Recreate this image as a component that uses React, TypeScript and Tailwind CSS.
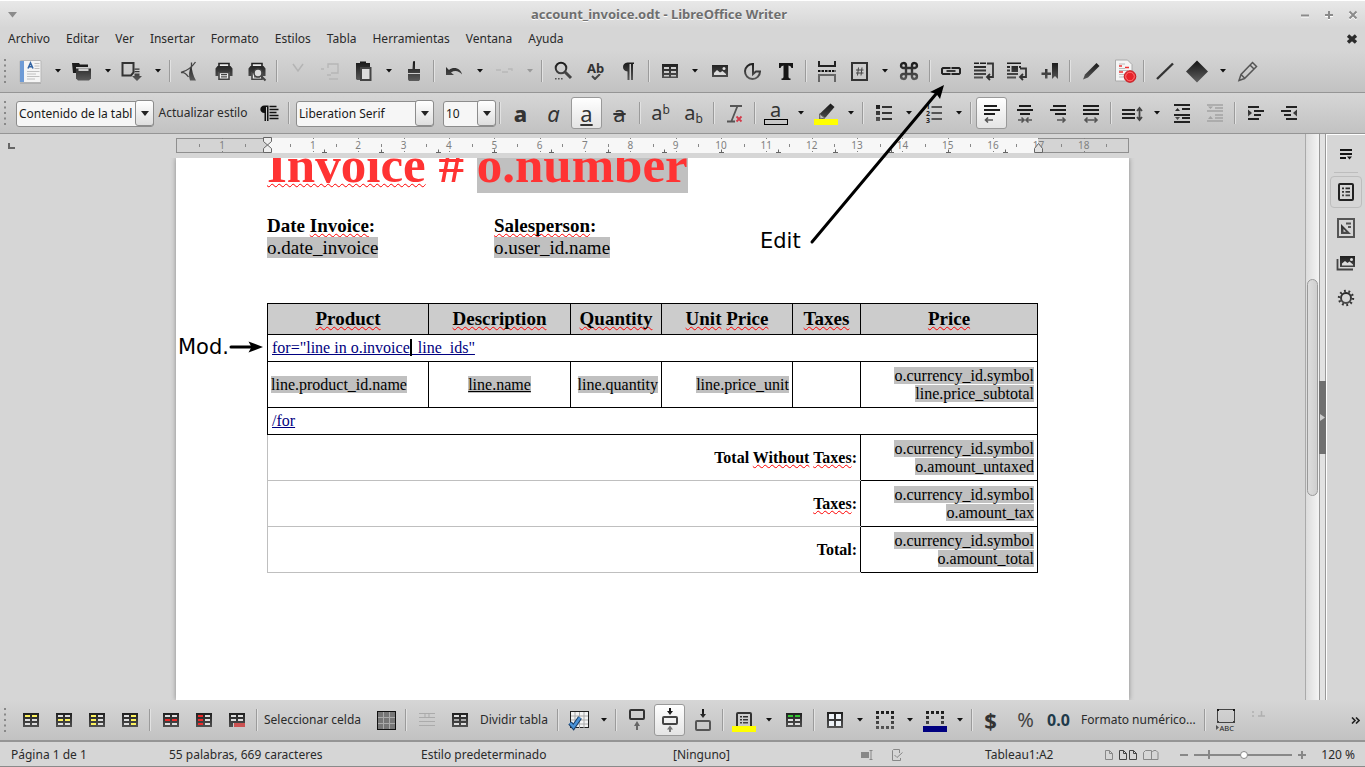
import React from "react";

type Kids = { children?: React.ReactNode };

const G = "url(#ink)";

function Ico({ children }: Kids) {
  return (
    <svg viewBox="0 0 24 24" className="h-6 w-6 shrink-0 overflow-visible" fill={G} aria-hidden="true">
      {children}
    </svg>
  );
}

function Btn({ label, active, children }: Kids & { label: string; active?: boolean }) {
  return (
    <button
      type="button"
      aria-label={label}
      title={label}
      className={
        active
          ? "mx-px flex h-8 w-[31px] shrink-0 items-center justify-center rounded-[3px] border border-[#999] bg-gradient-to-b from-white to-[#e4e4e4]"
          : "flex h-8 w-[33px] shrink-0 items-center justify-center"
      }
    >
      {children}
    </button>
  );
}

function Arrow({ dim }: { dim?: boolean }) {
  return (
    <button type="button" aria-label="Más opciones" className="flex h-8 w-[17px] shrink-0 items-center justify-center">
      <svg viewBox="0 0 6 4" className="h-1 w-1.5" fill={dim ? "#999" : "#111"} aria-hidden="true">
        <path d="M0 0H6L3 3.6z" />
      </svg>
    </button>
  );
}

function Sep() {
  return (
    <div className="flex w-2 shrink-0 justify-center">
      <div className="h-[22px] w-0.5 border-l border-[#9b9b9b] bg-[#e2e2e2]" />
    </div>
  );
}

function Handle({ wide }: { wide?: boolean }) {
  return (
    <div className={wide ? "w-4 shrink-0 pl-1" : "w-3.5 shrink-0 pl-1"}>
      <svg viewBox="0 0 2 24" className="h-6 w-0.5" fill="#888" aria-hidden="true">
        <path d="M0 0h2v2H0zM0 5.5h2v2H0zM0 11h2v2H0zM0 16.5h2v2H0zM0 22h2v2H0z" />
      </svg>
    </div>
  );
}

function Combo({ label, value, width }: { label: string; value: string; width: string }) {
  return (
    <div className={`relative h-[26px] shrink-0 ${width}`}>
      <select
        aria-label={label}
        className="h-full w-full appearance-none overflow-hidden rounded-[3px] border border-[#8c8c8c] bg-[#f6f6f6] pr-[21px] pl-0.5 text-xs text-[#1a1a1a]"
      >
        <option>{value}</option>
      </select>
      <span className="pointer-events-none absolute inset-y-0 right-0 flex w-[19px] items-center justify-center rounded-[3px] border border-[#8c8c8c] bg-gradient-to-b from-white to-[#dedede]">
        <svg viewBox="0 0 8 5" className="h-[5px] w-2" fill="#222" aria-hidden="true">
          <path d="M0 0H8L4 5z" />
        </svg>
      </span>
    </div>
  );
}

function TitleBar() {
  return (
    <header className="flex h-7 shrink-0 items-center border-t border-white bg-gradient-to-b from-[#e8e8e8] to-[#d6d6d6] text-[#8b8b8b]">
      <button type="button" aria-label="Menú de ventana" className="flex w-[25px] justify-center">
        <svg viewBox="0 0 9 6" className="h-1.5 w-[9px]" fill="#8b8b8b" aria-hidden="true">
          <path d="M0 0H9L4.5 5.5z" />
        </svg>
      </button>
      <h1 className="flex-1 text-center text-[13px] font-bold text-[#6e6e6e] [text-shadow:0_1px_0_#fff]">
        account_invoice.odt - LibreOffice Writer
      </h1>
      {[
        ["Minimizar", "M1 5.5H9"],
        ["Maximizar", "M1 5H9M5 1V9"],
        ["Cerrar", "M1.5 1.5L8.5 8.5M8.5 1.5L1.5 8.5"],
      ].map(([n, d]) => (
        <button key={n} type="button" aria-label={n} className="flex w-6 justify-center">
          <svg viewBox="0 0 10 10" className="h-2.5 w-2.5" fill="none" aria-hidden="true">
            <path d={d} stroke="#fff" strokeWidth="2" transform="translate(0 1)" />
            <path d={d} stroke="#8b8b8b" strokeWidth="2" />
          </svg>
        </button>
      ))}
    </header>
  );
}

const MENUS = ["Archivo", "Editar", "Ver", "Insertar", "Formato", "Estilos", "Tabla", "Herramientas", "Ventana", "Ayuda"];

function MenuBar() {
  return (
    <nav className="flex h-[22px] shrink-0 items-center justify-between bg-[#d6d6d6] pr-2">
      <div className="flex">
        {MENUS.map((m) => (
          <button key={m} type="button" className="px-2 text-xs leading-5">
            {m}
          </button>
        ))}
      </div>
      <button type="button" aria-label="Cerrar documento">
        <svg viewBox="0 0 10 10" className="h-2.5 w-2.5" aria-hidden="true">
          <path d="M1 1.5L9 8.5M9 1.5L1 8.5" stroke="#2c2c2c" strokeWidth="3.4" />
        </svg>
      </button>
    </nav>
  );
}

function Printer() {
  return (
    <>
      <path d="M7 4.5h10v4H7z" fill="#eee" stroke="#222" strokeWidth="1.6" />
      <path d="M3.5 9.5L5.5 7h13l2 2.5V17h-3v-4h-11v4h-3z" />
      <path d="M7 13.5h10v6.7H7z" fill="#eee" stroke="#444" strokeWidth="1.6" />
      <path d="M9 15h6v1.2H9zM9 17.3h6v1.2H9z" />
    </>
  );
}

function StandardBar() {
  return (
    <div role="toolbar" aria-label="Estándar" className="flex h-[43px] shrink-0 items-center border-b border-[#959595] bg-gradient-to-b from-[#d6d6d6] to-[#c2c2c2]">
      <Handle wide />
      <Btn label="Nuevo">
        <Ico>
          <rect x="-1" y="23" width="21" height="2" fill="#999" opacity=".5" />
          <rect x="-1" y="1.5" width="21" height="22" rx="1" fill="#f5f5f5" stroke="#b5b5b5" />
          <path d="M-1 2h4v21h-4z" fill="#6e9bd6" />
          <path d="M7 9.5L9.5 4l2.5 5.5M8 7.7h3" fill="none" stroke="#3465a4" strokeWidth="1.6" />
          <path d="M13.5 4.5h5M13.5 7h5M13.5 9.5h5M6 12.5h12.5M6 15h9M6 17.5h12.5M6 20h8" stroke="#c0c0c0" />
        </Ico>
      </Btn>
      <Arrow />
      <Btn label="Abrir">
        <Ico>
          <path d="M1 4h7l1 1.5h8V8H5v6H2z" fill="#1c1c1c" />
          <path d="M5 9.5h15v10L18 21.500H7L5 19.500z" />
          <path d="M7.500 9.500h10v2.500h-10z" fill="#ccc" />
        </Ico>
      </Btn>
      <Arrow />
      <Btn label="Guardar">
        <Ico>
          <path d="M1.5 4h11v9.500L10 16.5H1.5z" fill="none" stroke="#333" strokeWidth="2" />
          <path d="M13.500 9.500h5v1.300h-5zM13.500 12h5v1.300h-5zM13.500 14.500h5V17H21l-5 5-5-5h2.500z" />
        </Ico>
      </Btn>
      <Arrow />
      <Sep />
      <Btn label="Exportar a PDF">
        <Ico>
          <path d="M12.500 6Q13 15 17 21.500h-6Q8.500 14 12.500 6z" />
          <path d="M16.500 3Q11 11 2 13.500 6 13 9.500 18M12.500 3.500v5" fill="none" stroke="#444" strokeWidth="1.300" />
        </Ico>
      </Btn>
      <Btn label="Imprimir"><Ico><Printer /></Ico></Btn>
      <Btn label="Previsualización">
        <Ico>
          <Printer />
          <circle cx="13" cy="14" r="4" fill="#ddd" stroke="#444" strokeWidth="1.6" />
          <path d="M16 17l4.500 4.500" stroke="#444" strokeWidth="2" />
        </Ico>
      </Btn>
      <Sep />
      <Btn label="Cortar"><Ico><path d="M7 5l5 7 5-7" fill="none" stroke="#b4b4b4" strokeWidth="1.5" /></Ico></Btn>
      <Btn label="Copiar"><Ico><path d="M9 9V5h10v9h-7M5 10H2M10 20h9M8 16h4" fill="none" stroke="#b6b6b6" strokeWidth="1.3" /></Ico></Btn>
      <Btn label="Pegar">
        <Ico>
          <path d="M4 4h4V2.500h6V4h4v4H9v13H5l-1-1z" />
          <path d="M9 9h9.500v12H9z" fill="#ddd" stroke="#444" strokeWidth="2" />
        </Ico>
      </Btn>
      <Arrow />
      <Btn label="Clonar formato"><Ico><path d="M11 2.500q1.500-1 2 0V10h5v4H6v-4h4.500zM6 15h12v5.500L17 22H7l-1-1.500z" /></Ico></Btn>
      <Sep />
      <Btn label="Deshacer"><Ico><path d="M3 8v8h8l-3-2.500c4-2.500 8-1.500 11 2-1-6-8-8.500-13-4.500z" /></Ico></Btn>
      <Arrow />
      <Btn label="Rehacer"><Ico><path d="M3 11h5M9 13h6M15 10h4v2" fill="none" stroke="#b8b8b8" strokeWidth="1.300" /></Ico></Btn>
      <Arrow dim />
      <Sep />
      <Btn label="Buscar y reemplazar">
        <Ico>
          <circle cx="10" cy="9" r="5.300" fill="none" stroke={G} strokeWidth="2" />
          <path d="M14 13l6 6" stroke="#444" strokeWidth="3" />
          <path d="M4 19h1.600v1.600H4zM7 19h1.600v1.600H7zM10 19h1.600v1.600H10z" />
        </Ico>
      </Btn>
      <Btn label="Ortografía">
        <span className="flex flex-col items-center text-[13px] leading-3 font-bold text-[#333]">
          Ab
          <svg viewBox="0 0 10 6" className="h-1.5 w-2.5" fill="none" stroke="#444" strokeWidth="2" aria-hidden="true"><path d="M1 2l3 3 5-5" /></svg>
        </span>
      </Btn>
      <Btn label="Marcas de formato"><Ico><path d="M17 3.500v1.500h-1v16h-2V5h-1.500v16h-2v-8.500C4.500 12.500 4.500 3.500 10.500 3.500z" /></Ico></Btn>
      <Sep />
      <Btn label="Tabla"><Ico><path fillRule="evenodd" d="M4 5h16v14H4zM6 8v2h5V8zm7 0v2h5V8zM6 12v2h5v-2zm7 0v2h5v-2zM6 16v1.500h5V16zm7 0v1.500h5V16z" /></Ico></Btn>
      <Arrow />
      <Btn label="Imagen"><Ico><path d="M4 6h16v12H4z" /><path d="M6 16v-2l3-3 3 2.500 2.500-1.500 3.500 3v1z" fill="#ddd" /><circle cx="16" cy="9.500" r="1.500" fill="#ddd" /></Ico></Btn>
      <Btn label="Gráfico"><Ico><path d="M12 5A7.500 7.500 0 1 0 19 12.500h-4L12 15z" fill="none" stroke={G} strokeWidth="2" /></Ico></Btn>
      <Btn label="Cuadro de texto"><Ico><path d="M5 4h14v5h-1.500Q17 6.500 14.500 6.500V18q0 1.500 2 1.500V21h-9v-1.500q2 0 2-1.500V6.500Q7 6.500 6.500 9H5z" fill="#151515" /></Ico></Btn>
      <Sep />
      <Btn label="Salto de página">
        <Ico>
          <path d="M4 2v5h16V2" fill="none" stroke="#222" strokeWidth="2" />
          <path d="M4 23v-7h16v7" fill="none" stroke="#666" strokeWidth="2" />
          <path d="M3 12h18" stroke="#111" strokeWidth="2" strokeDasharray="2.500 1" />
        </Ico>
      </Btn>
      <Btn label="Campo"><Ico><rect x="4" y="4" width="15" height="17" fill="none" stroke="#333" strokeWidth="2" /><path d="M10.500 8.500l-1 8M14 8.500l-1 8M8 11h7.500M8 14h7.500" stroke="#444" fill="none" /></Ico></Btn>
      <Arrow />
      <Btn label="Carácter especial"><Ico><path d="M9 9H6A2.500 2.500 0 1 1 9 6v12A2.500 2.500 0 1 1 6 15h12A2.500 2.500 0 1 1 15 18V6A2.500 2.500 0 1 1 18 9z" transform="translate(-1 0)" fill="none" stroke={G} strokeWidth="2.400" /></Ico></Btn>
      <Sep />
      <Btn label="Hiperenlace">
        <Ico>
          <path d="M10.500 10V9H4L3 10v4l1 1h6.500v-1M13.500 10V9H20l1 1v4l-1 1h-6.500v-1" fill="none" stroke="#222" strokeWidth="2" />
          <path d="M7.500 11h9v2h-9z" />
        </Ico>
      </Btn>
      <Btn label="Nota al pie">
        <Ico>
          <path d="M2 3.500h5V5H2zM8 3.500h6V5H8zM2 7h12v2H2zM2 10.500h12v2H2zM2 14h12v2H2zM2 17.500h9v2H2z" />
          <path d="M15 4.500h6V18h-6M18 15l-3 3 3 3" fill="none" stroke="#333" strokeWidth="1.800" />
        </Ico>
      </Btn>
      <Btn label="Nota final">
        <Ico>
          <path d="M2 3.500h14V5H2zM2 7h3v2H2zM6.500 7H13v6H6.500zM2 10.500h3v2H2zM2 14h11v2H2zM2 17.500h9v2H2zM14 7h2v2h-2z" />
          <path d="M15 9.500h6V18h-6M18 15l-3 3 3 3" fill="none" stroke="#333" strokeWidth="1.800" />
        </Ico>
      </Btn>
      <Btn label="Marcador"><Ico><path d="M14 4h6v16l-3-3-3 3zM7 10h2.500v3.500H13V16H9.500v3.500H7V16H3.500v-2.500H7z" /></Ico></Btn>
      <Sep />
      <Btn label="Comentario"><Ico><path d="M17.500 4L20.500 7 9 18.500 4 20.500 6 15.500z" /></Ico></Btn>
      <Btn label="Control de cambios">
        <Ico>
          <path d="M3.500 1h12l4.500 4.500V22H3.500z" fill="#f5f5f5" stroke="#aaa" />
          <path d="M7 7h3M13 8.500h4M7 13h4" stroke="#e33" strokeWidth="1.300" />
          <path d="M7 5h6M7 9.500h6M7 11.500h9M7 15.500h5M7 18h5" stroke="#bbb" />
          <circle cx="18" cy="17.500" r="5.800" fill="#e8232a" stroke="#c4171d" />
          <circle cx="18" cy="17.500" r="4.300" fill="none" stroke="#f77" />
        </Ico>
      </Btn>
      <Sep />
      <Btn label="Línea"><Ico><path d="M4 20L20 4.500" stroke="#333" strokeWidth="2.400" /></Ico></Btn>
      <Btn label="Formas"><Ico><path d="M11 1.500l11 11-11 11-11-11z" /></Ico></Btn>
      <Arrow />
      <Btn label="Funciones de dibujo"><Ico><path d="M16.500 3.500l4 4L8.500 19.500l-5.500 2 2-6zM14 6l4 4M5.500 16l3 3" fill="none" stroke="#555" strokeWidth="1.500" /></Ico></Btn>
    </div>
  );
}

function Align({ lines, arrow }: { lines: string; arrow: string }) {
  return (
    <Ico>
      <path d={lines} stroke="#1c1c1c" strokeWidth="2" />
      <path d={arrow} fill="none" stroke="#555" strokeWidth="1.600" />
    </Ico>
  );
}

function FormatBar() {
  return (
    <div role="toolbar" aria-label="Formato" className="flex h-[41px] shrink-0 items-center border-b border-[#959595] bg-gradient-to-b from-[#d6d6d6] to-[#c2c2c2]">
      <Handle wide />
      <Combo label="Estilo de párrafo" value="Contenido de la tabla" width="w-[138px]" />
      <button type="button" className="w-[98px] shrink-0 text-center text-xs">Actualizar estilo</button>
      <Btn label="Estilo nuevo">
        <Ico>
          <path d="M11.500 4.500V20H10V6H9v14H7.500v-8C2 12 2 4.500 7.500 4.500z" fill="#111" />
          <path d="M12.500 5.500h7M12.500 8.500h9M12.500 11.500h7M12.500 14.500h9M12.500 17.500h9" stroke="#111" strokeWidth="1.600" />
        </Ico>
      </Btn>
      <Sep />
      <div className="flex gap-[9px] pl-[3px]">
        <Combo label="Nombre del tipo de letra" value="Liberation Serif" width="w-[138px]" />
        <Combo label="Tamaño de letra" value="10" width="w-[53px]" />
      </div>
      <Sep />
      <Btn label="Negrita"><span className="text-[22px] leading-6 font-extrabold text-[#333]">a</span></Btn>
      <Btn label="Cursiva"><span className="text-[22px] leading-6 text-[#333] italic">a</span></Btn>
      <Btn label="Subrayado" active><span className="text-[22px] leading-6 text-[#333] underline decoration-2 underline-offset-2">a</span></Btn>
      <Btn label="Tachado"><span className="text-[22px] leading-6 text-[#333] line-through decoration-2">a</span></Btn>
      <Sep />
      <Btn label="Superíndice"><span className="text-xl leading-6 text-[#333]">a<sup className="text-[12px]">b</sup></span></Btn>
      <Btn label="Subíndice"><span className="text-xl leading-6 text-[#333]">a<sub className="text-[12px]">b</sub></span></Btn>
      <Sep />
      <Btn label="Limpiar formato">
        <Ico>
          <path d="M7 5h12M4 20.500h8M14.500 5L8.500 20" fill="none" stroke="#555" strokeWidth="1.800" />
          <path d="M13.500 15.500l5 5M18.500 15.500l-5 5" stroke="#d33a4a" strokeWidth="1.800" />
        </Ico>
      </Btn>
      <Sep />
      <Btn label="Color de letra">
        <span className="flex flex-col items-center">
          <span className="text-xl leading-[18px] text-[#333]">a</span>
          <span className="h-1.5 w-6 border border-black" />
        </span>
      </Btn>
      <Arrow />
      <Btn label="Color de resaltado">
        <Ico>
          <path d="M16.500 2.500l4 3.500-9 10.500L5 18l.500-5z" />
          <path d="M5.500 13l5.500 4-5 1z" fill="#bbb" stroke="#666" />
          <rect y="18" width="24" height="6" fill="#ff0" />
        </Ico>
      </Btn>
      <Arrow />
      <Sep />
      <Btn label="Viñetas">
        <Ico>
          <path d="M4 4h4v4H4zM4 10h4v4H4zM4 16h4v4H4z" />
          <path d="M10 6h10M10 12h10M10 18h10" stroke="#333" strokeWidth="2" />
        </Ico>
      </Btn>
      <Arrow />
      <Btn label="Numeración">
        <Ico>
          <path d="M9.500 6H20M9.500 12H20M9.500 18H20" stroke="#555" strokeWidth="2" />
          <text x="4" y="7.500" fontSize="7" fontWeight="bold" fill="#222">1</text>
          <text x="4" y="14.500" fontSize="7" fontWeight="bold" fill="#222">2</text>
          <text x="4" y="21.500" fontSize="7" fontWeight="bold" fill="#222">3</text>
        </Ico>
      </Btn>
      <Arrow />
      <Sep />
      <Btn label="Alinear a la izquierda" active><Align lines="M4 5H17M4 9H20M4 13H15" arrow="M5.500 19H13M8 16.500L5.500 19L8 21.500" /></Btn>
      <Btn label="Centrar"><Align lines="M6 5H18M4 9H20M7 13H17" arrow="M5 19H11M8.500 16.500L11 19L8.500 21.500M19 19H13M15.500 16.500L13 19L15.500 21.500" /></Btn>
      <Btn label="Alinear a la derecha"><Align lines="M7 5H20M4 9H20M9 13H20" arrow="M11 19H19M16.500 16.500L19 19L16.500 21.500" /></Btn>
      <Btn label="Justificar"><Align lines="M4 5H20M4 9H20M4 13H20" arrow="M6 19H18M8.500 16.500L6 19L8.500 21.500M15.500 16.500L18 19L15.500 21.500" /></Btn>
      <Sep />
      <Btn label="Interlineado">
        <Ico>
          <path d="M2 9H15M2 13H15M2 17H15" stroke="#222" strokeWidth="2" />
          <path d="M19.500 7V18M17 10L19.500 7L22 10M17 16L19.500 19L22 16" fill="none" stroke="#444" strokeWidth="1.800" />
        </Ico>
      </Btn>
      <Arrow />
      <Btn label="Aumentar espaciado">
        <Ico>
          <path d="M4 4H20M12 8H20M4 14H20M12 17H20M4 21H20" stroke="#222" strokeWidth="2" />
          <path d="M5 10L7.500 7L10 10zM5 16L7.500 19L10 16z" />
        </Ico>
      </Btn>
      <Btn label="Disminuir espaciado">
        <Ico>
          <path d="M4 4H20M12 7H20M4 10H20M12 14H20M12 17H20M4 20H20" stroke="#a2a2a2" strokeWidth="1.500" />
          <path d="M5 5.500H10L7.500 8zM5 18L7.500 15L10 18z" fill="#a2a2a2" />
        </Ico>
      </Btn>
      <Sep />
      <Btn label="Aumentar sangría">
        <Ico>
          <path d="M4 6H15M10 10H20M10 14H17M4 18H15" stroke="#222" strokeWidth="2" />
          <path d="M4 8.500L8 12L4 15.500z" />
        </Ico>
      </Btn>
      <Btn label="Disminuir sangría">
        <Ico>
          <path d="M9 6H20M4 10H14M7 14H14M9 18H20" stroke="#222" strokeWidth="2" />
          <path d="M20 8.500L16 12L20 15.500z" />
        </Ico>
      </Btn>
    </div>
  );
}

const CM = 45.35;
const ZERO = 91.5;

function Ruler() {
  const nums = Array.from({ length: 20 }, (_, i) => i - 1).filter((n) => n !== 0);
  const halves = Array.from({ length: 21 }, (_, i) => i - 1.5);
  const tabs = Array.from({ length: 13 }, (_, i) => i + 1);
  return (
    <svg viewBox="0 0 953 24" className="h-6 w-full" aria-hidden="true">
      <rect x=".5" y="4.500" width="952" height="14" fill="#d4d4d4" stroke="#8f8f8f" />
      <rect x="91" y="4" width="771" height="15" fill="#f7f7f7" />
      {halves.map((n) => (
        <rect key={n} x={Math.round(ZERO + n * CM)} y="10" width="1" height="3" fill="#888" />
      ))}
      {nums.filter((n) => n < 19).map((n) => (
        <g key={n} fill="#808080">
          <rect x={Math.round(ZERO + n * CM)} y="4" width="1" height="1" />
          <rect x={Math.round(ZERO + n * CM)} y="17" width="1" height="1" />
          <text x={ZERO + n * CM} y="15" fontSize="10" textAnchor="middle">{Math.abs(n)}</text>
        </g>
      ))}
      {tabs.map((t) => (
        <path key={t} d={`M${Math.round(ZERO + t * 56.7) - 2} 18.500h5m-2.500 0v-3`} stroke="#666" fill="none" />
      ))}
      <path d="M87.500 3.500h8v4l-8 7v4h8v-4l-8-7z" fill="#eee" stroke="#666" />
      <path d="M858.500 18.500v-4l4-5 4 5v4z" fill="#e2e2e2" stroke="#666" />
    </svg>
  );
}

function Wavy({ children }: Kids) {
  return <span className="underline decoration-[#f00] decoration-wavy decoration-1 underline-offset-1 [text-decoration-skip-ink:none]">{children}</span>;
}

function Field({ children, line }: Kids & { line?: boolean }) {
  return <span className={line ? "bg-[#c0c0c0] underline" : "bg-[#c0c0c0]"}>{children}</span>;
}

const TOTALS: { label: React.ReactNode; field: string }[] = [
  { label: <>Total <Wavy>Without</Wavy> <Wavy>Taxes</Wavy>:</>, field: "o.amount_untaxed" },
  { label: <><Wavy>Taxes</Wavy>:</>, field: "o.amount_tax" },
  { label: "Total:", field: "o.amount_total" },
];

function InvoiceTable() {
  const cell = "border border-black p-0 px-[3px]";
  return (
    <table className="mt-11 w-full table-fixed border-collapse text-base leading-[18px]">
      <colgroup>
        <col className="w-[161px]" />
        <col className="w-[142px]" />
        <col className="w-[91px]" />
        <col className="w-[131px]" />
        <col className="w-[68px]" />
        <col />
      </colgroup>
      <thead>
        <tr className="h-[31px] bg-[#ccc] text-[19px]">
          {["Product", "Description", "Quantity"].map((h) => (
            <th key={h} className="border border-black p-0"><Wavy>{h}</Wavy></th>
          ))}
          <th className="border border-black p-0"><Wavy>Unit</Wavy> <Wavy>Price</Wavy></th>
          <th className="border border-black p-0"><Wavy>Taxes</Wavy></th>
          <th className="border border-black p-0"><Wavy>Price</Wavy></th>
        </tr>
      </thead>
      <tbody>
        <tr className="h-[27px]">
          <td colSpan={6} className={cell}>
            <a href="#for" className="ml-px text-[#000080] underline">for="line in o.invoice<span className="relative"><span className="absolute inset-y-0 left-0 w-0.5 bg-black" />_line_ids"</span></a>
          </td>
        </tr>
        <tr className="h-[46px]">
          <td className={cell}><Field>line.product_id.name</Field></td>
          <td className={cell + " text-center"}><Field line>line.name</Field></td>
          <td className={cell + " text-right"}><Field>line.quantity</Field></td>
          <td className={cell + " text-right"}><Field>line.price_unit</Field></td>
          <td className={cell} />
          <td className={cell + " text-right"}><Field>o.currency_id.symbol</Field><br /><Field>line.price_subtotal</Field></td>
        </tr>
        <tr className="h-[27px]">
          <td colSpan={6} className={cell}><a href="#end" className="ml-px text-[#000080] underline">/for</a></td>
        </tr>
        {TOTALS.map((t) => (
          <tr key={t.field} className="h-[46px]">
            <th colSpan={5} className="border border-[#bfbfbf] border-r-black p-0 px-[3px] text-right">{t.label}</th>
            <td className={cell + " text-right"}><Field>o.currency_id.symbol</Field><br /><Field>{t.field}</Field></td>
          </tr>
        ))}
      </tbody>
    </table>
  );
}

function Page() {
  return (
    <article className="h-full overflow-hidden bg-white px-[91px] font-['Liberation_Serif',serif] text-black shadow-[0_0_5px_#888]">
      <h2 className="-mt-[22px] text-[51px] leading-[58px] font-bold text-[#f33]">
        <Wavy>Invoice</Wavy> # <Field>o.number</Field>
      </h2>
      <div className="mt-[21px] flex text-[19px] leading-[22px]">
        <p className="w-[227px]">
          <b>Date <Wavy>Invoice</Wavy>:</b><br />
          <Field>o.date_invoice</Field>
        </p>
        <p>
          <b><Wavy>Salesperson</Wavy>:</b><br />
          <Field>o.user_id.name</Field>
        </p>
      </div>
      <InvoiceTable />
    </article>
  );
}

function Sidebar() {
  return (
    <aside className="flex w-[39px] shrink-0 flex-col items-center border-t border-l border-white bg-[#d6d6d6] pt-[7px]">
      <button type="button" aria-label="Configuración de la barra lateral" className="flex h-6 w-8 items-center justify-center">
        <Ico><path d="M6 7h12v2H6zM6 11h12v2H6zM6 15h6v2H6zM13 14.500h5l-2.500 3z" fill="#151515" /></Ico>
      </button>
      <hr className="mt-1.5 mb-[3px] w-6 border-[#bdbdbd]" />
      <button type="button" aria-label="Propiedades" className="flex h-8 w-8 items-center justify-center rounded border border-[#bdbdbd]">
        <Ico>
          <rect x="5" y="4" width="14" height="16" rx="1" fill="none" stroke="#222" strokeWidth="2" />
          <path d="M8 7.500h2v1.800H8zM11.500 7.500H16v1.800h-4.500zM8 11h2v1.800H8zM11.500 11H16v1.800h-4.500zM8 14.500h2v1.800H8zM11.500 14.500H16v1.800h-4.500z" />
        </Ico>
      </button>
      <button type="button" aria-label="Estilos" className="mt-1 flex h-8 w-8 items-center justify-center">
        <Ico>
          <rect x="4" y="3" width="16" height="18" fill="none" stroke="#555" strokeWidth="2" />
          <path fillRule="evenodd" d="M7 8v10h10zM9.500 13l2.500 2.700H9.500z" />
          <path d="M12 7.500h5M14 11h3" stroke="#555" strokeWidth="1.800" />
        </Ico>
      </button>
      <button type="button" aria-label="Galería" className="mt-[3px] flex h-8 w-8 items-center justify-center">
        <Ico>
          <path d="M6 5h15v11H6z" />
          <path d="M3.500 8v10.500H19" fill="none" stroke="#444" strokeWidth="1.800" />
          <path d="M8 14.500v-2l3-2.500 2.500 2 2-1.500 3.500 3v1z" fill="#ddd" />
          <circle cx="17.500" cy="8.500" r="1.500" fill="#ddd" />
        </Ico>
      </button>
      <button type="button" aria-label="Navegador" className="mt-[3px] flex h-8 w-8 items-center justify-center">
        <Ico>
          <circle cx="12" cy="12" r="5" fill="none" stroke={G} strokeWidth="2" />
          <circle cx="12" cy="12" r="7" fill="none" stroke="#333" strokeWidth="2.400" strokeDasharray="1.800 2.600" />
        </Ico>
      </button>
    </aside>
  );
}

function Workspace() {
  return (
    <main className="flex min-h-0 flex-1">
      <div className="flex min-w-0 flex-1 flex-col overflow-hidden bg-[#d6d6d6]">
        <div className="grid shrink-0 grid-cols-[1fr_953px_1fr]">
          <svg viewBox="0 0 16 24" className="h-6 w-4" fill="none" aria-hidden="true">
            <path d="M9 9v5h6" stroke="#666" strokeWidth="2" />
          </svg>
          <Ruler />
        </div>
        <div className="grid min-h-0 flex-1 grid-cols-[1fr_953px_1fr] overflow-hidden">
          <div />
          <Page />
        </div>
      </div>
      <div className="w-[14px] shrink-0 border-l border-[#aaa] bg-gradient-to-r from-[#dcdcdc] to-[#f4f4f4] px-px pt-[145px]">
        <div className="h-[217px] rounded-full border border-[#999] bg-gradient-to-r from-[#ddd] to-[#cfcfcf]" />
      </div>
      <div className="flex w-[7px] shrink-0 flex-col justify-center border-x border-[#999] bg-[#e2e2e2]">
        <button type="button" aria-label="Ocultar barra lateral" className="-mx-px flex h-[73px] items-center justify-center bg-[#707070]">
          <svg viewBox="0 0 5 7" className="h-[7px] w-[5px]" fill="#ccc" aria-hidden="true"><path d="M0 0L5 3.500L0 7z" /></svg>
        </button>
      </div>
      <Sidebar />
    </main>
  );
}

const CELLS = [
  [6, 7], [13, 7],
  [6, 11], [13, 11],
  [6, 15], [13, 15],
];

function Grid({ hot, color }: { hot: number[]; color: string }) {
  return (
    <Ico>
      <path d="M4 5h16v14H4z" />
      {CELLS.map(([x, y], i) => (
        <rect key={i} x={x} y={y} width="5" height="2" fill={hot.includes(i) ? color : "#ddd"} />
      ))}
    </Ico>
  );
}

function Dotted() {
  return <path d="M4.500 4.500h15v15h-15z" fill="none" stroke={G} strokeWidth="3" strokeDasharray="3 2" strokeDashoffset="1.5" />;
}

function TableBar() {
  return (
    <div role="toolbar" aria-label="Tabla" className="flex h-[42px] shrink-0 items-center border-b-2 border-[#959595] bg-gradient-to-b from-[#d6d6d6] to-[#c2c2c2]">
      <Handle />
      <Btn label="Insertar filas encima"><Grid hot={[0, 1]} color="#fdf25c" /></Btn>
      <Btn label="Insertar filas debajo"><Grid hot={[2, 3]} color="#fdf25c" /></Btn>
      <Btn label="Insertar columnas antes"><Grid hot={[0, 2, 4]} color="#fdf25c" /></Btn>
      <Btn label="Insertar columnas después"><Grid hot={[1, 3, 5]} color="#fdf25c" /></Btn>
      <Sep />
      <Btn label="Eliminar filas"><Grid hot={[2, 3]} color="#ee2a2a" /></Btn>
      <Btn label="Eliminar columnas"><Grid hot={[0, 2, 4]} color="#ee2a2a" /></Btn>
      <Btn label="Eliminar tabla">
        <Ico>
          <path d="M4 5h16v10H4zM4 15h4v4H4z" />
          {CELLS.slice(0, 4).map(([x, y], i) => <rect key={i} x={x} y={y} width="5" height="2" fill="#ddd" />)}
          <rect x="9" y="15" width="11" height="4" fill="#cb5252" />
        </Ico>
      </Btn>
      <Sep />
      <button type="button" className="w-[108px] shrink-0 pl-[3px] text-left text-xs whitespace-nowrap">Seleccionar celda</button>
      <Btn label="Seleccionar tabla">
        <Ico>
          <rect x="3.500" y="3.500" width="18" height="18" fill="#777" stroke="#111" />
          <path d="M9.500 4v17M15.500 4v17M4 9.500h17M4 15.500h17" stroke="#aaa" />
        </Ico>
      </Btn>
      <Sep />
      <Btn label="Combinar celdas"><Ico><path d="M4 5.500h16M4 9.500h16M4 13.500h16M4 17.500h16M10 5.500v4M14 5.500v4" stroke="#ababab" fill="none" /></Ico></Btn>
      <Btn label="Dividir celdas"><Grid hot={[2, 3]} color="#aaa" /></Btn>
      <button type="button" className="w-[78px] shrink-0 pl-1 text-left text-xs whitespace-nowrap">Dividir tabla</button>
      <Sep />
      <Btn label="Estilos de autoformato">
        <Ico>
          <rect x="3.500" y="3.500" width="18" height="16" fill="#f4f4f4" stroke="#222" />
          <path d="M8 4v16M12.500 4v16M17 4v16M4 8h17M4 12h17M4 16h17" stroke="#aaa" />
          <path d="M3 15l3.500 4L13 9.500" fill="none" stroke="#183c66" strokeWidth="4.500" />
          <path d="M3 15l3.500 4L13 9.500" fill="none" stroke="#4b93d8" strokeWidth="2.500" />
        </Ico>
      </Btn>
      <Arrow />
      <Sep />
      <Btn label="Alinear arriba">
        <Ico>
          <rect x="5" y="2" width="14" height="9" rx="1" fill="none" stroke="#333" strokeWidth="2" />
          <path d="M12 13l3 5h-2v4h-2v-4H9z" fill="#666" />
        </Ico>
      </Btn>
      <Btn label="Centrar verticalmente" active>
        <Ico>
          <rect x="5" y="9" width="14" height="7" rx="1" fill="none" stroke="#444" strokeWidth="2" />
          <path d="M11 0h2v3h2l-3 4-3-4h2z" />
          <path d="M12 17.500l3 4h-2V24h-2v-2.500H9z" fill="#777" />
        </Ico>
      </Btn>
      <Btn label="Alinear abajo">
        <Ico>
          <rect x="5" y="13" width="14" height="9" rx="1" fill="none" stroke="#555" strokeWidth="2" />
          <path d="M11 1h2v5h2l-3 4-3-4h2z" />
        </Ico>
      </Btn>
      <Sep />
      <Btn label="Color de fondo">
        <Ico>
          <rect x="5" y="5" width="14" height="14" rx="1" fill="none" stroke="#333" strokeWidth="2" />
          <path d="M8 8h2v1.500H8zM11 8h5v1.500h-5zM8 11h2v1.500H8zM11 11h5v1.500h-5zM8 14h2v1.500H8zM11 14h5v1.500h-5z" />
          <rect y="18" width="24" height="6" fill="#ff0" />
        </Ico>
      </Btn>
      <Arrow />
      <Btn label="Autoformato"><Grid hot={[0, 1]} color="#35c935" /></Btn>
      <Sep />
      <Btn label="Bordes">
        <Ico>
          <path d="M4 4h16v16H4z" />
          <path d="M6 6h5v5H6zM13 6h5v5h-5zM6 13h5v5H6zM13 13h5v5h-5z" fill="#eef3f8" />
        </Ico>
      </Btn>
      <Arrow />
      <Btn label="Estilo de borde"><Ico><Dotted /></Ico></Btn>
      <Arrow />
      <Btn label="Color de borde"><Ico><Dotted /><rect y="18" width="24" height="6" fill="#000080" /></Ico></Btn>
      <Arrow />
      <Sep />
      <Btn label="Moneda"><span className="pr-1 text-[22px] leading-6 font-bold text-[#333]">$</span></Btn>
      <Btn label="Porcentaje"><span className="text-xl leading-6 text-[#444]">%</span></Btn>
      <Btn label="Decimal"><span className="text-base leading-6 font-bold text-[#1f3a4a]">0.0</span></Btn>
      <button type="button" className="w-[126px] shrink-0 pl-1.5 text-left text-xs whitespace-nowrap">Formato numérico...</button>
      <Sep />
      <Btn label="Descripción">
        <Ico>
          <rect x="3.500" y="1.500" width="17" height="13" fill="none" stroke="#444" />
          <path d="M3 1h2v2H3zM19 1h2v2h-2zM3 13h2v2H3zM19 13h2v2h-2zM2 17l3 2.500L2 22z" />
          <text x="5.500" y="22.500" fontSize="7.500" fill="#222">ABC</text>
        </Ico>
      </Btn>
      <Btn label="Fórmula"><Ico><path d="M5 4h2M5 8h2M11 8h7M14.500 3v5" stroke="#b0b0b0" strokeWidth="1.500" /></Ico></Btn>
      <button type="button" aria-label="Más controles" className="mr-[5px] ml-auto">
        <svg viewBox="0 0 9 7" className="h-[7px] w-[9px]" fill="none" stroke="#222" strokeWidth="1.600" aria-hidden="true">
          <path d="M1 .500l3 3-3 3M5 .500l3 3-3 3" />
        </svg>
      </button>
    </div>
  );
}

function StatusBar() {
  return (
    <footer className="flex h-[25px] shrink-0 items-center border-b border-[#8a8a8a] bg-[#d6d6d6] pt-px pr-2.5 pl-[11px] text-xs whitespace-nowrap">
      <span className="w-[158px]">Página 1 de 1</span>
      <span className="w-[252px]">55 palabras, 669 caracteres</span>
      <span className="w-[252px]">Estilo predeterminado</span>
      <span className="w-[188px]">[Ninguno]</span>
      <span className="flex flex-1 items-center gap-[18px]">
        <svg viewBox="0 0 12 12" className="h-3 w-3" fill="#888" aria-hidden="true">
          <path d="M0 3h8v6H0z" />
          <path d="M8.500 1.500h3M10 1.500v9M8.500 10.500h3" stroke="#888" />
        </svg>
        <svg viewBox="0 0 12 12" className="h-3 w-3" fill="none" stroke="#888" aria-hidden="true">
          <path d="M8.500 4V.500h-6l-1 1v10h8V9M3.500 6l2.500 2.500L11.500 3.500" />
        </svg>
      </span>
      <span className="w-[120px]">Tableau1:A2</span>
      <svg viewBox="0 0 56 12" className="h-3 w-14 shrink-0" fill="none" aria-hidden="true">
        <path d="M.5 1.500h4l3 3v6h-7zM4.500 1.500v3h3M38.500 10.500v-7l2-2h5.500l1.500 1 1.500-1h2l2 2v7zM46.500 2v8.500" stroke="#888" />
        <path d="M14.500 1.500h4l3 3v6h-7zM18.500 1.500v3h3M24.500 1.500h4l3 3v6h-7zM28.500 1.500v3h3" stroke="#444" />
      </svg>
      <div className="ml-[19px] flex items-center gap-1.5">
        <button type="button" aria-label="Reducir" className="h-0.5 w-2 bg-[#888]" />
        <span className="relative flex items-center">
          <input
            type="range"
            aria-label="Escala"
            defaultValue={51}
            className="h-[9px] w-[98px] appearance-none bg-[linear-gradient(#888,#888)] bg-[length:100%_2px] bg-center bg-no-repeat [&::-webkit-slider-thumb]:h-2 [&::-webkit-slider-thumb]:w-2 [&::-webkit-slider-thumb]:appearance-none [&::-webkit-slider-thumb]:rounded-full [&::-webkit-slider-thumb]:border [&::-webkit-slider-thumb]:border-[#888] [&::-webkit-slider-thumb]:bg-white"
          />
          <span className="pointer-events-none absolute inset-y-0 left-3.5 w-0.5 bg-[#888]" />
        </span>
        <button type="button" aria-label="Ampliar">
          <svg viewBox="0 0 8 8" className="h-2 w-2" stroke="#888" strokeWidth="2" aria-hidden="true"><path d="M0 4h8M4 0v8" /></svg>
        </button>
      </div>
      <span className="w-[49px] text-right">120 %</span>
    </footer>
  );
}

function Callouts() {
  return (
    <svg className="pointer-events-none absolute inset-0 h-full w-full" fill="#000" stroke="none" aria-label="Anotaciones">
      <path d="M812 242L936 94" stroke="#000" strokeWidth="3" strokeLinecap="round" />
      <path d="M944 85l-4 14-3.500-5-6.500-2z" />
      <path d="M231 347H252" stroke="#000" strokeWidth="3" strokeLinecap="round" />
      <path d="M263 347l-14.500 5.500 3-5.500-3-5.500z" />
      <text x="760" y="248" fontSize="21" className="font-['DejaVu_Sans',sans-serif]">Edit</text>
      <text x="178" y="354" fontSize="21" className="font-['DejaVu_Sans',sans-serif]">Mod.</text>
    </svg>
  );
}

export default function App() {
  return (
    <div className="relative flex h-screen flex-col overflow-hidden bg-[#d6d6d6] font-['Noto_Sans',sans-serif] text-[#2a2a2a]">
      <svg className="absolute h-0 w-0" aria-hidden="true">
        <defs>
          <linearGradient id="ink" gradientUnits="userSpaceOnUse" x1="0" y1="2" x2="0" y2="22">
            <stop offset="0" stopColor="#151515" />
            <stop offset="1" stopColor="#5c5c5c" />
          </linearGradient>
        </defs>
      </svg>
      <TitleBar />
      <MenuBar />
      <StandardBar />
      <FormatBar />
      <Workspace />
      <TableBar />
      <StatusBar />
      <Callouts />
    </div>
  );
}
